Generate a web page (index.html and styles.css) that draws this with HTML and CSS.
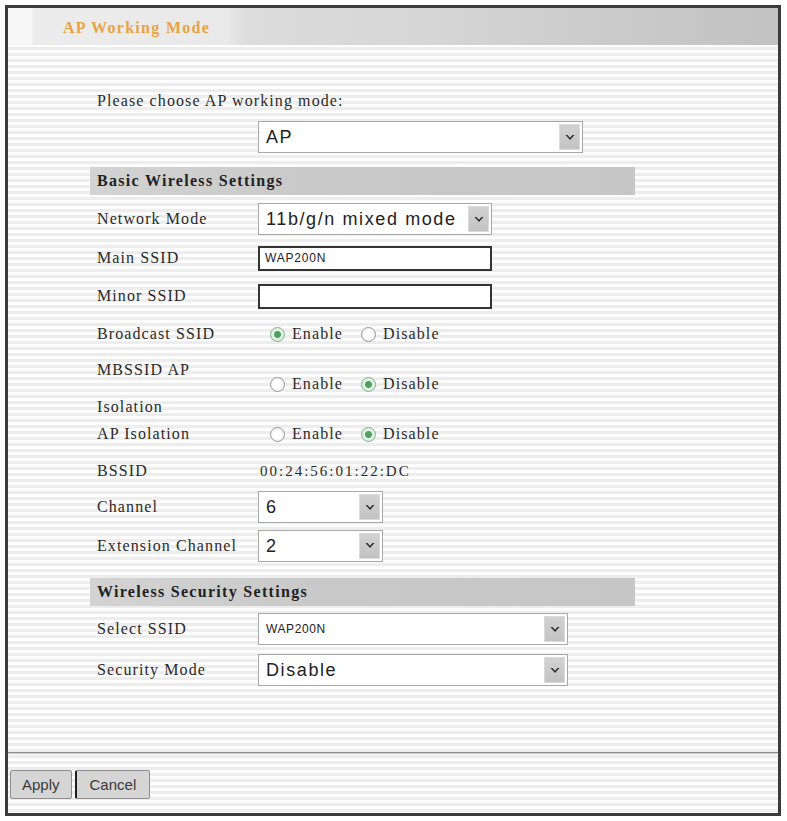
FILE: index.html
```html
<!DOCTYPE html>
<html lang="en">
<head>
    <meta charset="UTF-8">
    <meta name="viewport" content="width=device-width, initial-scale=1.0">
    <title>AP Working Mode</title>
    <link rel="stylesheet" href="styles.css">
</head>
<body>
    <div class="frame">
        <div class="tab-bar">
            <span class="tab-title">AP Working Mode</span>
        </div>

        <div class="content">
            <div class="mode-label">Please choose AP working mode:</div>
            <div class="mode-select">
                <div class="select w-mode">
                    <span class="value">AP</span>
                    <span class="arrow"><svg width="10" height="7" viewBox="0 0 10 7"><path d="M0.5 1 L5 6 L9.5 1 L7.6 1 L5 3.8 L2.4 1 Z" fill="#2b2b2b"/></svg></span>
                </div>
            </div>

            <div class="section">
                <div class="section-title">Basic Wireless Settings</div>

                <div class="row h40">
                    <div class="label">Network Mode</div>
                    <div class="select w-net">
                        <span class="value">11b/g/n mixed mode</span>
                        <span class="arrow"><svg width="10" height="7" viewBox="0 0 10 7"><path d="M0.5 1 L5 6 L9.5 1 L7.6 1 L5 3.8 L2.4 1 Z" fill="#2b2b2b"/></svg></span>
                    </div>
                </div>

                <div class="row h38">
                    <div class="label">Main SSID</div>
                    <input class="text-input" type="text" value="WAP200N">
                </div>

                <div class="row h38">
                    <div class="label">Minor SSID</div>
                    <input class="text-input" type="text" value="">
                </div>

                <div class="row h38">
                    <div class="label">Broadcast SSID</div>
                    <div class="radios">
                        <label><span class="radio checked"></span>Enable</label>
                        <label><span class="radio"></span>Disable</label>
                    </div>
                </div>

                <div class="row h62">
                    <div class="label two-line">MBSSID AP<br>Isolation</div>
                    <div class="radios">
                        <label><span class="radio"></span>Enable</label>
                        <label><span class="radio checked"></span>Disable</label>
                    </div>
                </div>

                <div class="row h38">
                    <div class="label">AP Isolation</div>
                    <div class="radios">
                        <label><span class="radio"></span>Enable</label>
                        <label><span class="radio checked"></span>Disable</label>
                    </div>
                </div>

                <div class="row h36">
                    <div class="label">BSSID</div>
                    <div class="plain-value">00:24:56:01:22:DC</div>
                </div>

                <div class="row h36">
                    <div class="label">Channel</div>
                    <div class="select w-chan">
                        <span class="value">6</span>
                        <span class="arrow"><svg width="10" height="7" viewBox="0 0 10 7"><path d="M0.5 1 L5 6 L9.5 1 L7.6 1 L5 3.8 L2.4 1 Z" fill="#2b2b2b"/></svg></span>
                    </div>
                </div>

                <div class="row h41">
                    <div class="label">Extension Channel</div>
                    <div class="select w-chan">
                        <span class="value">2</span>
                        <span class="arrow"><svg width="10" height="7" viewBox="0 0 10 7"><path d="M0.5 1 L5 6 L9.5 1 L7.6 1 L5 3.8 L2.4 1 Z" fill="#2b2b2b"/></svg></span>
                    </div>
                </div>
            </div>

            <div class="section security">
                <div class="section-title">Wireless Security Settings</div>

                <div class="row h46">
                    <div class="label">Select SSID</div>
                    <div class="select w-sec">
                        <span class="value small">WAP200N</span>
                        <span class="arrow"><svg width="10" height="7" viewBox="0 0 10 7"><path d="M0.5 1 L5 6 L9.5 1 L7.6 1 L5 3.8 L2.4 1 Z" fill="#2b2b2b"/></svg></span>
                    </div>
                </div>

                <div class="row h36">
                    <div class="label">Security Mode</div>
                    <div class="select w-sec">
                        <span class="value">Disable</span>
                        <span class="arrow"><svg width="10" height="7" viewBox="0 0 10 7"><path d="M0.5 1 L5 6 L9.5 1 L7.6 1 L5 3.8 L2.4 1 Z" fill="#2b2b2b"/></svg></span>
                    </div>
                </div>
            </div>
        </div>

        <div class="separator"></div>

        <div class="actions">
            <button class="btn">Apply</button>
            <button class="btn btn-cancel">Cancel</button>
        </div>
    </div>
</body>
</html>
```

FILE: styles.css
```css
body {
    margin: 0;
    background: #fff;
    width: 787px;
    height: 821px;
}

.frame {
    margin: 5px 6px 5px 5px;
    height: 811px;
    box-sizing: border-box;
    border: 3px solid #3b3b3b;
    display: flex;
    flex-direction: column;
    background: repeating-linear-gradient(to bottom, #fdfdfd 0px, #fdfdfd 3px, #ededed 3px, #ededed 6px);
}

.tab-bar {
    height: 37px;
    flex-shrink: 0;
    display: flex;
    align-items: center;
    padding-left: 55px;
    background: linear-gradient(to right, #f7f7f7 0px, #f7f7f7 24px, #ececec 25px, #e9e9e9 220px, #dcdcdc 240px, #d6d6d6 420px, #cdcdcd 560px, #c2c2c2 100%);
}

.tab-title {
    color: #e8a443;
    font-family: "Liberation Serif", serif;
    font-size: 16px;
    font-weight: bold;
    letter-spacing: 1.3px;
    padding-top: 2px;
}

.content {
    flex: 1;
    padding-left: 82px;
}

.mode-label {
    margin-top: 46px;
    padding-left: 7px;
    height: 20px;
    line-height: 20px;
    font-family: "Liberation Serif", serif;
    font-size: 16px;
    letter-spacing: 1.1px;
    color: #2a2a2a;
}

.mode-select {
    margin-top: 10px;
    padding-left: 168px;
}

.section {
    width: 545px;
    margin-top: 14px;
}

.section.security {
    margin-top: 12px;
}

.section-title {
    height: 28px;
    line-height: 28px;
    margin-bottom: 4px;
    padding-left: 7px;
    background: linear-gradient(to right, #d3d3d3, #c9c9c9 40%, #c6c6c6);
    font-family: "Liberation Serif", serif;
    font-size: 16px;
    font-weight: bold;
    letter-spacing: 1.3px;
    color: #222;
}

.security .section-title {
    margin-bottom: 0;
}

.row {
    display: flex;
    align-items: center;
    padding-left: 7px;
}

.h36 { height: 36px; }
.h38 { height: 38px; }
.h40 { height: 40px; }
.h41 { height: 41px; }
.h46 { height: 46px; }
.h62 { height: 62px; }

.label {
    width: 161px;
    flex-shrink: 0;
    font-family: "Liberation Serif", serif;
    font-size: 16px;
    letter-spacing: 1.1px;
    color: #2a2a2a;
}

.label.two-line {
    line-height: 37px;
    margin-top: 7px;
}

/* drop-down boxes */
.select {
    display: flex;
    align-items: stretch;
    height: 32px;
    box-sizing: border-box;
    border: 1px solid #a8a8a8;
    background: #fff;
}

.w-mode { width: 325px; }
.w-net { width: 234px; }
.w-chan { width: 125px; }
.w-sec { width: 310px; }

.select .value {
    flex: 1;
    padding-left: 7px;
    line-height: 30px;
    font-family: "Liberation Sans", sans-serif;
    font-size: 18px;
    letter-spacing: 1.6px;
    color: #222;
    white-space: nowrap;
    overflow: hidden;
}

.select .value.small {
    font-size: 12px;
    letter-spacing: 0.6px;
}

.select .arrow {
    width: 21px;
    margin: 2px 2px 2px 0;
    box-sizing: border-box;
    border: 1px solid #dadada;
    background: linear-gradient(to bottom, #d2d2d2, #c3c3c3);
    display: flex;
    align-items: center;
    justify-content: center;
}

.text-input {
    width: 234px;
    height: 25px;
    box-sizing: border-box;
    margin: 0;
    padding: 0 5px;
    border: 2px solid #333;
    background: #fff;
    font-family: "Liberation Sans", sans-serif;
    font-size: 12px;
    letter-spacing: 0.8px;
    color: #222;
}

.radios {
    display: flex;
    align-items: center;
    padding-left: 12px;
    font-family: "Liberation Serif", serif;
    font-size: 16px;
    letter-spacing: 1.1px;
    color: #2a2a2a;
}

.radios label {
    display: flex;
    align-items: center;
    margin-right: 18px;
}

.radio {
    width: 15px;
    height: 15px;
    box-sizing: border-box;
    border-radius: 50%;
    border: 1px solid #999;
    background: radial-gradient(circle, #ffffff 40%, #e2e2e2 100%);
    margin-right: 7px;
}

.radio.checked {
    border-color: #7fb68a;
    background: radial-gradient(circle, #4fa05e 0px, #4fa05e 3px, #e7f1e8 4px, #d3e7d6 100%);
}

.plain-value {
    padding-left: 2px;
    font-family: "Liberation Serif", serif;
    font-size: 15px;
    letter-spacing: 2px;
    color: #2a2a2a;
}

.separator {
    height: 1px;
    flex-shrink: 0;
    background: #8c8c8c;
    box-shadow: 0 1px 1px #c4c4c4;
}

.actions {
    height: 60px;
    flex-shrink: 0;
    display: flex;
    align-items: flex-start;
    padding: 17px 0 0 2px;
    box-sizing: border-box;
}

.btn {
    height: 29px;
    padding: 0 11px;
    border: 1px solid #8e8e8e;
    border-radius: 2px;
    background: #d5d5d5;
    font-family: "Liberation Sans", sans-serif;
    font-size: 15px;
    color: #3a3a3a;
    cursor: pointer;
}

.btn-cancel {
    margin-left: 3px;
    border-left: 2px solid #1e1e1e;
    padding: 0 13px;
}
```
